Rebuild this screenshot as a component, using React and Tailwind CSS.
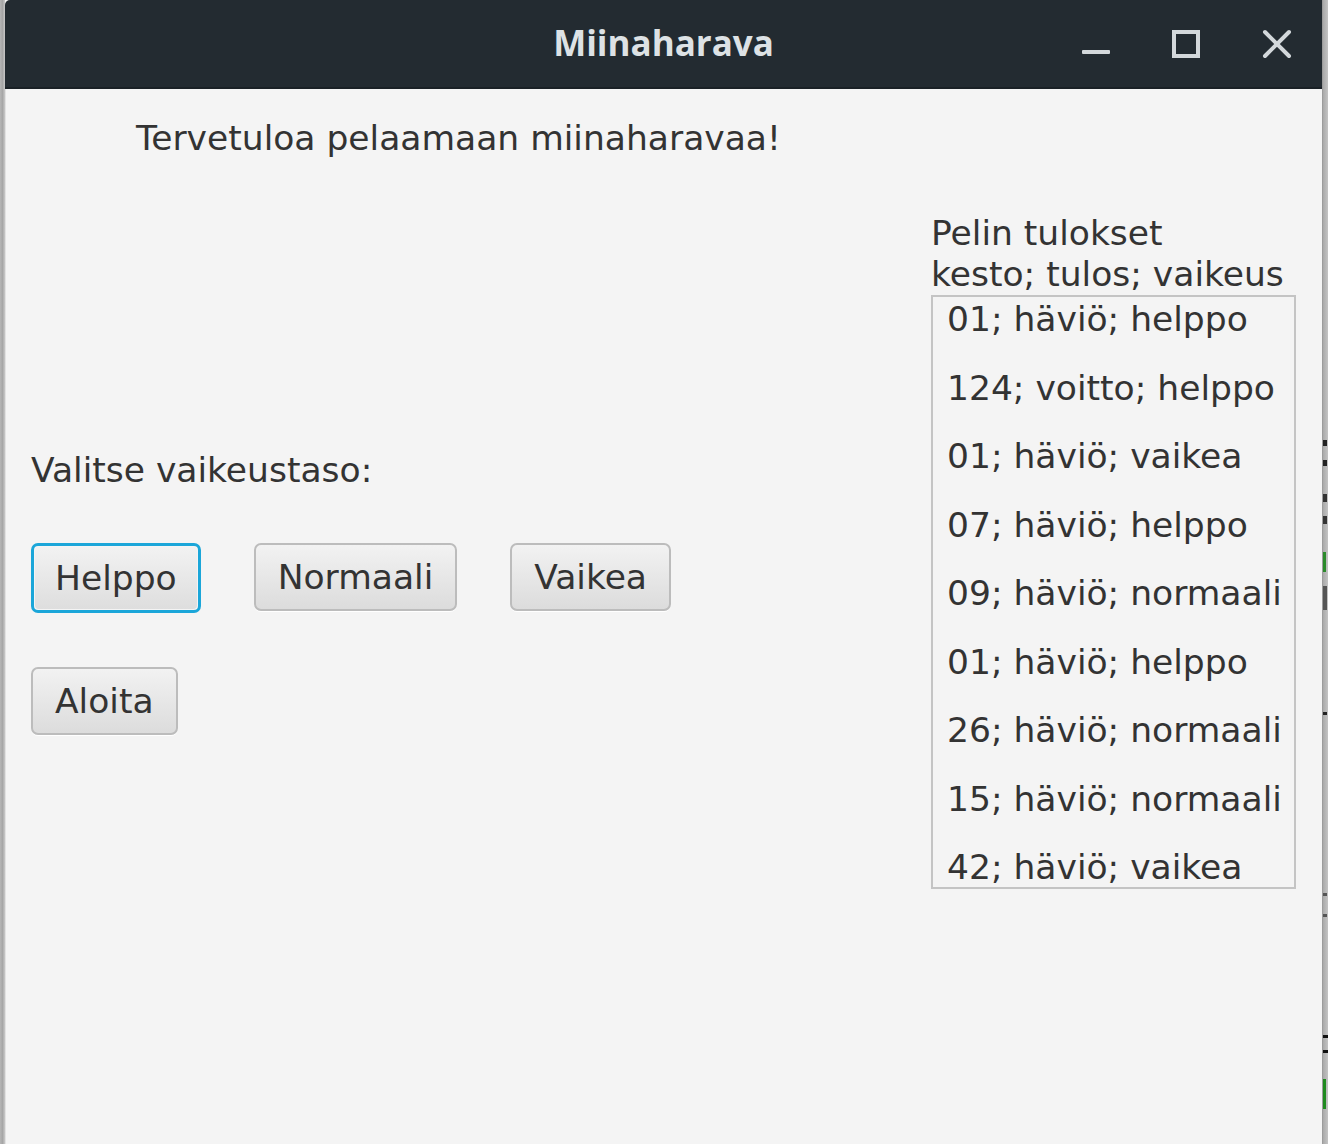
import React from 'react';

const results = [
  '01; häviö; helppo',
  '124; voitto; helppo',
  '01; häviö; vaikea',
  '07; häviö; helppo',
  '09; häviö; normaali',
  '01; häviö; helppo',
  '26; häviö; normaali',
  '15; häviö; normaali',
  '42; häviö; vaikea',
];

function FxButton({ children, focused }) {
  if (focused) {
    return (
      <div className="rounded-[7px] border-[3px] border-[#1ba6d9] p-px">
        <button className="h-[62px] rounded-[4px] bg-gradient-to-b from-[#f2f2f2] to-[#dedede] px-[20px] text-[34.5px] leading-[40px] text-[#333]">
          {children}
        </button>
      </div>
    );
  }
  return (
    <button className="h-[68px] rounded-[7px] border-2 border-[#bcbcbc] bg-gradient-to-b from-[#f2f2f2] to-[#dcdcdc] px-[22px] text-[34.5px] leading-[40px] text-[#333] shadow-[0_1px_0_#ffffff]">
      {children}
    </button>
  );
}

function WindowControls() {
  return (
    <div className="flex items-center gap-[62px] pr-[30px]">
      <svg width="28" height="28" viewBox="0 0 28 28">
        <rect x="0" y="20" width="28" height="4" rx="1" fill="#d3d8db" />
      </svg>
      <svg width="28" height="28" viewBox="0 0 28 28">
        <rect x="2" y="2" width="24" height="24" fill="none" stroke="#d3d8db" strokeWidth="4" />
      </svg>
      <svg width="30" height="30" viewBox="0 0 30 30">
        <path d="M3 3 L27 27 M27 3 L3 27" stroke="#d3d8db" strokeWidth="4" strokeLinecap="round" />
      </svg>
    </div>
  );
}

export default function App() {
  return (
    <div className="flex h-[1144px] overflow-hidden bg-[#bdbdbd] [font-family:'DejaVu_Sans',sans-serif]">
      <div className="w-[5px] bg-gradient-to-r from-[#b6b6b6] via-[#a6a6a6] to-[#c9c9c9]" />

      <div className="flex flex-1 flex-col bg-[#f4f4f4]">
        <div className="flex h-[89px] items-center rounded-tl-[5px] border-b-2 border-[#1a2126] bg-[#232b31]">
          <div className="w-[240px]" />
          <div className="flex-1 text-center text-[35px] font-bold text-[#dde2e5] [font-family:'Open_Sans',sans-serif]">
            Miinaharava
          </div>
          <WindowControls />
        </div>

        <div className="flex flex-1 border-l border-[#e2e2e2] text-[#333]">
          <div className="flex flex-1 flex-col pl-[25px]">
            <p className="ml-[105px] mt-[29px] text-[34.5px] leading-[40px] whitespace-nowrap">
              Tervetuloa pelaamaan miinaharavaa!
            </p>
            <p className="mt-[292px] text-[34.5px] leading-[40px] whitespace-nowrap">Valitse vaikeustaso:</p>
            <div className="mt-[53px] flex gap-[53px]">
              <FxButton focused>Helppo</FxButton>
              <FxButton>Normaali</FxButton>
              <FxButton>Vaikea</FxButton>
            </div>
            <div className="mt-[54px] flex">
              <FxButton>Aloita</FxButton>
            </div>
          </div>

          <div className="mr-[26px] flex w-[365px] flex-col">
            <p className="mt-[123px] text-[34.5px] leading-[42px] whitespace-nowrap">Pelin tulokset</p>
            <p className="text-[34.5px] leading-[41px] whitespace-nowrap">kesto; tulos; vaikeus</p>
            <div className="h-[594px] overflow-hidden border-2 border-[#c4c4c4] bg-[#f4f4f4] pt-[2px]">
              {results.map((r, i) => (
                <div key={i} className="h-[68.5px] pl-[14px] text-[34.5px] leading-[40px] whitespace-nowrap">
                  {r}
                </div>
              ))}
            </div>
          </div>
        </div>
      </div>

      <div className="flex w-[6px] flex-col border-l border-[#9c9c9c] bg-gradient-to-r from-[#a9a9a9] to-[#c4c4c4]">
        <div className="mt-[440px] h-[6px] w-[4px] bg-[#222]" />
        <div className="mt-[14px] h-[6px] w-[4px] bg-[#222]" />
        <div className="mt-[28px] h-[8px] w-[4px] bg-[#333]" />
        <div className="mt-[14px] h-[8px] w-[4px] bg-[#333]" />
        <div className="mt-[28px] h-[20px] w-[3px] bg-[#2a8a2a]" />
        <div className="mt-[14px] h-[24px] w-[4px] bg-[#555]" />
        <div className="mt-[102px] h-[3px] w-[4px] bg-[#222]" />
        <div className="mt-[178px] h-[3px] w-[4px] bg-[#555]" />
        <div className="mt-[18px] h-[3px] w-[4px] bg-[#555]" />
        <div className="mt-[118px] h-[3px] w-[5px] bg-[#111]" />
        <div className="mt-[12px] h-[3px] w-[5px] bg-[#111]" />
        <div className="mt-[26px] h-[30px] w-[3px] bg-[#1f8a1f]" />
      </div>
    </div>
  );
}
